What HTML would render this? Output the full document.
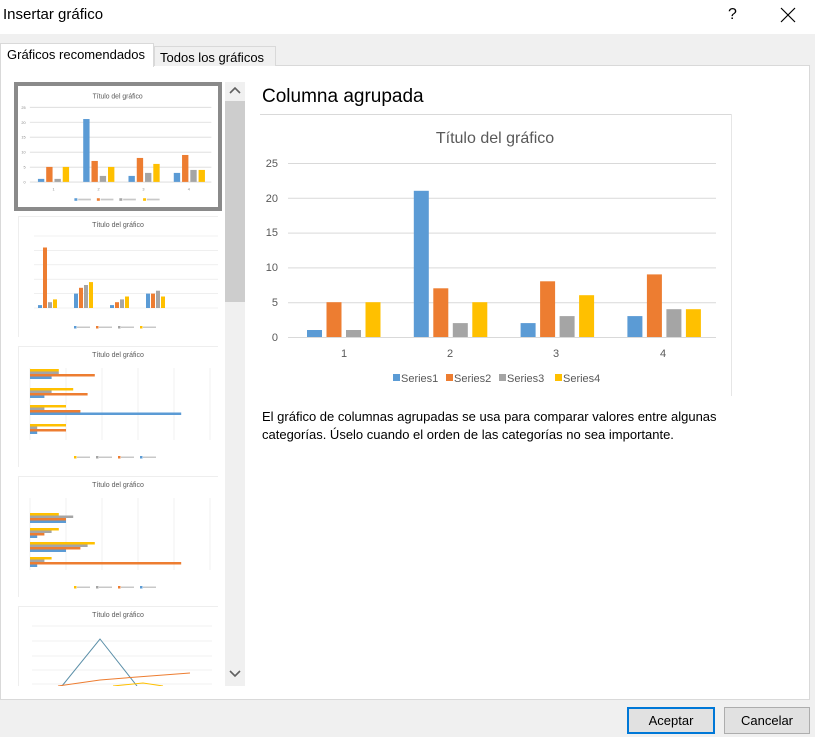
<!DOCTYPE html>
<html><head><meta charset="utf-8"><style>
*{margin:0;padding:0;box-sizing:border-box}
body{width:815px;height:737px;background:#f0f0f0;font-family:"Liberation Sans",sans-serif;position:relative;overflow:hidden;color:#000}
.abs{position:absolute}
.btn{position:absolute;top:707px;height:27px;background:#e1e1e1;border:1px solid #adadad;font-size:13px;text-align:center;line-height:25px}
</style></head><body>
<div class="abs" style="left:0;top:0;width:815px;height:34px;background:#fff"></div>
<div class="abs" style="left:3px;top:6px;font-size:15px">Insertar gráfico</div>
<div class="abs" style="left:728px;top:6px;font-size:16px">?</div>
<svg class="abs" style="left:780px;top:7px" width="16" height="16"><path d="M1 1L15 15M15 1L1 15" stroke="#000" stroke-width="1.2"/></svg>
<div class="abs" style="left:0;top:65px;width:810px;height:635px;background:#fff;border:1px solid #d9d9d9"></div>
<div class="abs" style="left:0;top:43px;width:154px;height:24px;background:#fff;border:1px solid #d9d9d9;border-bottom:none;font-size:13px;padding:3px 0 0 6px">Gráficos recomendados</div>
<div class="abs" style="left:154px;top:46px;width:122px;height:20px;background:#f0f0f0;border:1px solid #d9d9d9;border-bottom:none;font-size:13px;padding:3px 0 0 5px">Todos los gráficos</div>
<div class="abs" style="left:225px;top:82px;width:20px;height:604px;background:#f0f0f0"></div>
<div class="abs" style="left:225px;top:101px;width:20px;height:201px;background:#cdcdcd"></div>
<svg class="abs" style="left:229px;top:86px" width="12" height="10"><path d="M1 7L6 2L11 7" stroke="#606060" stroke-width="1.6" fill="none"/></svg>
<svg class="abs" style="left:229px;top:669px" width="12" height="10"><path d="M1 2L6 7L11 2" stroke="#606060" stroke-width="1.6" fill="none"/></svg>
<div class="abs" style="left:262px;top:86px;font-size:19px">Columna agrupada</div>
<div class="abs" style="left:260px;top:114px;width:471px;height:1px;background:#d9d9d9"></div>
<div class="abs" style="left:731px;top:114px;width:1px;height:282px;background:#e6e6e6"></div>
<div class="abs" style="left:262px;top:408px;font-size:13px;line-height:18px;width:500px">El gráfico de columnas agrupadas se usa para comparar valores entre algunas categorías. Úselo cuando el orden de las categorías no sea importante.</div>
<div class="btn" style="left:627px;width:88px;border:2px solid #0078d7;line-height:23px">Aceptar</div>
<div class="btn" style="left:724px;width:86px">Cancelar</div>

<svg class="abs" style="left:0;top:0" width="815" height="737" font-family="Liberation Sans, sans-serif">
<defs>
<clipPath id="lc"><rect x="14" y="82" width="209" height="604"/></clipPath>
</defs>
<g transform="translate(260,114)">
<text x="235" y="29" font-size="16" fill="#595959" text-anchor="middle">Título del gráfico</text>
<g stroke="#d9d9d9" stroke-width="1"><path d="M28 49.5H456M28 84.3H456M28 119.1H456M28 153.9H456M28 188.7H456M28 223.5H456"/></g>
<g font-size="11" fill="#595959" text-anchor="end"><text x="18" y="53">25</text><text x="18" y="88">20</text><text x="18" y="122">15</text><text x="18" y="157">10</text><text x="18" y="192">5</text><text x="18" y="227">0</text></g>
<g fill="#5b9bd5"><rect x="47" y="216" width="15" height="7"/><rect x="153.8" y="76.8" width="15" height="146.2"/><rect x="260.6" y="209.1" width="15" height="13.9"/><rect x="367.4" y="202.1" width="15" height="20.9"/></g>
<g fill="#ed7d31"><rect x="66.5" y="188.2" width="15" height="34.8"/><rect x="173.3" y="174.3" width="15" height="48.7"/><rect x="280.1" y="167.3" width="15" height="55.7"/><rect x="386.9" y="160.4" width="15" height="62.6"/></g>
<g fill="#a5a5a5"><rect x="86" y="216" width="15" height="7"/><rect x="192.8" y="209.1" width="15" height="13.9"/><rect x="299.6" y="202.1" width="15" height="20.9"/><rect x="406.4" y="195.2" width="15" height="27.8"/></g>
<g fill="#ffc000"><rect x="105.5" y="188.2" width="15" height="34.8"/><rect x="212.3" y="188.2" width="15" height="34.8"/><rect x="319.1" y="181.2" width="15" height="41.8"/><rect x="425.9" y="195.2" width="15" height="27.8"/></g>
<g font-size="11" fill="#595959" text-anchor="middle"><text x="84" y="243">1</text><text x="190" y="243">2</text><text x="296" y="243">3</text><text x="403" y="243">4</text></g>
<g font-size="11" fill="#595959"><rect x="133" y="260" width="7" height="7" fill="#5b9bd5"/><text x="141" y="268">Series1</text><rect x="186" y="260" width="7" height="7" fill="#ed7d31"/><text x="194" y="268">Series2</text><rect x="239" y="260" width="7" height="7" fill="#a5a5a5"/><text x="247" y="268">Series3</text><rect x="295" y="260" width="7" height="7" fill="#ffc000"/><text x="303" y="268">Series4</text></g>
</g>

<g clip-path="url(#lc)">
<rect x="16" y="84" width="204" height="125" fill="none" stroke="#8a8a8a" stroke-width="4"/>
<g transform="translate(18,86) scale(0.424,0.43)">
<text x="235" y="29" font-size="16" fill="#595959" text-anchor="middle">Título del gráfico</text>
<g stroke="#d9d9d9" stroke-width="2"><path d="M28 49.5H456M28 84.3H456M28 119.1H456M28 153.9H456M28 188.7H456M28 223.5H456"/></g>
<g font-size="9" fill="#888" text-anchor="end"><text x="18" y="53">25</text><text x="18" y="88">20</text><text x="18" y="122">15</text><text x="18" y="157">10</text><text x="18" y="192">5</text><text x="18" y="227">0</text></g>
<g font-size="9" fill="#888" text-anchor="middle"><text x="84" y="243">1</text><text x="190" y="243">2</text><text x="296" y="243">3</text><text x="403" y="243">4</text></g>
<g fill="#5b9bd5"><rect x="47" y="216" width="15" height="7"/><rect x="153.8" y="76.8" width="15" height="146.2"/><rect x="260.6" y="209.1" width="15" height="13.9"/><rect x="367.4" y="202.1" width="15" height="20.9"/></g>
<g fill="#ed7d31"><rect x="66.5" y="188.2" width="15" height="34.8"/><rect x="173.3" y="174.3" width="15" height="48.7"/><rect x="280.1" y="167.3" width="15" height="55.7"/><rect x="386.9" y="160.4" width="15" height="62.6"/></g>
<g fill="#a5a5a5"><rect x="86" y="216" width="15" height="7"/><rect x="192.8" y="209.1" width="15" height="13.9"/><rect x="299.6" y="202.1" width="15" height="20.9"/><rect x="406.4" y="195.2" width="15" height="27.8"/></g>
<g fill="#ffc000"><rect x="105.5" y="188.2" width="15" height="34.8"/><rect x="212.3" y="188.2" width="15" height="34.8"/><rect x="319.1" y="181.2" width="15" height="41.8"/><rect x="425.9" y="195.2" width="15" height="27.8"/></g>
<g><rect x="133" y="261" width="7" height="6" fill="#5b9bd5"/><rect x="142" y="262" width="30" height="4" fill="#c8c8c8"/><rect x="186" y="261" width="7" height="6" fill="#ed7d31"/><rect x="195" y="262" width="30" height="4" fill="#c8c8c8"/><rect x="239" y="261" width="7" height="6" fill="#a5a5a5"/><rect x="248" y="262" width="30" height="4" fill="#c8c8c8"/><rect x="295" y="261" width="7" height="6" fill="#ffc000"/><rect x="304" y="262" width="30" height="4" fill="#c8c8c8"/></g>
</g>

<g id="leg" transform="translate(18,216)">
<path d="M0 0.5H200M0.5 0V121" stroke="#eee"/>
<text x="100" y="11" font-size="7" fill="#595959" text-anchor="middle">Título del gráfico</text>
<path d="M16 20H200M16 34.4H200M16 48.8H200M16 63.2H200M16 77.6H200M16 92H200" stroke="#e6e6e6" stroke-width="0.6"/>
<g fill="#5b9bd5"><rect x="20" y="89.1" width="4" height="2.9"/><rect x="56" y="77.6" width="4" height="14.4"/><rect x="92" y="89.1" width="4" height="2.9"/><rect x="128" y="77.6" width="4" height="14.4"/></g>
<g fill="#ed7d31"><rect x="25" y="31.5" width="4" height="60.5"/><rect x="61" y="71.8" width="4" height="20.2"/><rect x="97" y="86.2" width="4" height="5.8"/><rect x="133" y="77.6" width="4" height="14.4"/></g>
<g fill="#a5a5a5"><rect x="30" y="86.2" width="4" height="5.8"/><rect x="66" y="69" width="4" height="23"/><rect x="102" y="83.4" width="4" height="8.6"/><rect x="138" y="74.7" width="4" height="17.3"/></g>
<g fill="#ffc000"><rect x="35" y="83.4" width="4" height="8.6"/><rect x="71" y="66.1" width="4" height="25.9"/><rect x="107" y="80.5" width="4" height="11.5"/><rect x="143" y="80.5" width="4" height="11.5"/></g>
<g><rect x="56" y="110" width="2.5" height="2.5" fill="#5b9bd5"/><rect x="59" y="110.5" width="13" height="1.5" fill="#c8c8c8"/><rect x="78" y="110" width="2.5" height="2.5" fill="#ed7d31"/><rect x="81" y="110.5" width="13" height="1.5" fill="#c8c8c8"/><rect x="100" y="110" width="2.5" height="2.5" fill="#a5a5a5"/><rect x="103" y="110.5" width="13" height="1.5" fill="#c8c8c8"/><rect x="122" y="110" width="2.5" height="2.5" fill="#ffc000"/><rect x="125" y="110.5" width="13" height="1.5" fill="#c8c8c8"/></g>
</g>

<g transform="translate(18,346)">
<path d="M0 0.5H200M0.5 0V121" stroke="#eee"/>
<text x="100" y="11" font-size="7" fill="#595959" text-anchor="middle">Título del gráfico</text>
<path d="M12 22V94M48 22V94M84 22V94M120 22V94M156 22V94M192 22V94" stroke="#e6e6e6" stroke-width="0.6"/>
<g fill="#ffc000"><rect x="12" y="23" width="28.8" height="2.5"/><rect x="12" y="42" width="43.2" height="2.5"/><rect x="12" y="59" width="36" height="2.5"/><rect x="12" y="78" width="36" height="2.5"/></g>
<g fill="#a5a5a5"><rect x="12" y="25.5" width="28.8" height="2.5"/><rect x="12" y="44.5" width="21.6" height="2.5"/><rect x="12" y="61.5" width="14.4" height="2.5"/><rect x="12" y="80.5" width="7.2" height="2.5"/></g>
<g fill="#ed7d31"><rect x="12" y="28" width="64.8" height="2.5"/><rect x="12" y="47" width="57.6" height="2.5"/><rect x="12" y="64" width="50.4" height="2.5"/><rect x="12" y="83" width="36" height="2.5"/></g>
<g fill="#5b9bd5"><rect x="12" y="30.5" width="21.6" height="2.5"/><rect x="12" y="49.5" width="14.4" height="2.5"/><rect x="12" y="66.5" width="151.2" height="2.5"/><rect x="12" y="85.5" width="7.2" height="2.5"/></g>
<g><rect x="56" y="110" width="2.5" height="2.5" fill="#ffc000"/><rect x="59" y="110.5" width="13" height="1.5" fill="#c8c8c8"/><rect x="78" y="110" width="2.5" height="2.5" fill="#a5a5a5"/><rect x="81" y="110.5" width="13" height="1.5" fill="#c8c8c8"/><rect x="100" y="110" width="2.5" height="2.5" fill="#ed7d31"/><rect x="103" y="110.5" width="13" height="1.5" fill="#c8c8c8"/><rect x="122" y="110" width="2.5" height="2.5" fill="#5b9bd5"/><rect x="125" y="110.5" width="13" height="1.5" fill="#c8c8c8"/></g>
</g>

<g transform="translate(18,476)">
<path d="M0 0.5H200M0.5 0V121" stroke="#eee"/>
<text x="100" y="11" font-size="7" fill="#595959" text-anchor="middle">Título del gráfico</text>
<path d="M12 22V94M48 22V94M84 22V94M120 22V94M156 22V94M192 22V94" stroke="#e6e6e6" stroke-width="0.6"/>
<g fill="#ffc000"><rect x="12" y="81" width="21.6" height="2.5"/><rect x="12" y="66" width="64.8" height="2.5"/><rect x="12" y="52" width="28.8" height="2.5"/><rect x="12" y="37" width="28.8" height="2.5"/></g>
<g fill="#a5a5a5"><rect x="12" y="83.5" width="14.4" height="2.5"/><rect x="12" y="68.5" width="57.6" height="2.5"/><rect x="12" y="54.5" width="21.6" height="2.5"/><rect x="12" y="39.5" width="43.2" height="2.5"/></g>
<g fill="#ed7d31"><rect x="12" y="86" width="151.2" height="2.5"/><rect x="12" y="71" width="50.4" height="2.5"/><rect x="12" y="57" width="14.4" height="2.5"/><rect x="12" y="42" width="36" height="2.5"/></g>
<g fill="#5b9bd5"><rect x="12" y="88.5" width="7.2" height="2.5"/><rect x="12" y="73.5" width="36" height="2.5"/><rect x="12" y="59.5" width="7.2" height="2.5"/><rect x="12" y="44.5" width="36" height="2.5"/></g>
<g><rect x="56" y="110" width="2.5" height="2.5" fill="#ffc000"/><rect x="59" y="110.5" width="13" height="1.5" fill="#c8c8c8"/><rect x="78" y="110" width="2.5" height="2.5" fill="#a5a5a5"/><rect x="81" y="110.5" width="13" height="1.5" fill="#c8c8c8"/><rect x="100" y="110" width="2.5" height="2.5" fill="#ed7d31"/><rect x="103" y="110.5" width="13" height="1.5" fill="#c8c8c8"/><rect x="122" y="110" width="2.5" height="2.5" fill="#5b9bd5"/><rect x="125" y="110.5" width="13" height="1.5" fill="#c8c8c8"/></g>
</g>

<g transform="translate(18,606)">
<path d="M0 0.5H200M0.5 0V121" stroke="#eee"/>
<text x="100" y="11" font-size="7" fill="#595959" text-anchor="middle">Título del gráfico</text>
<path d="M14 20H194M14 35H194M14 50H194M14 64H194M14 78H194" stroke="#e6e6e6" stroke-width="0.6"/>
<path d="M44 80L82 33L119 80" stroke="#5b8fa8" stroke-width="1" fill="none"/>
<path d="M40 80L82 74L119 71L172 67" stroke="#ed7d31" stroke-width="1" fill="none"/>
<path d="M95 80L125 77L145 80" stroke="#ffc000" stroke-width="1" fill="none"/>
</g>
</g>
</svg>
</body></html>
